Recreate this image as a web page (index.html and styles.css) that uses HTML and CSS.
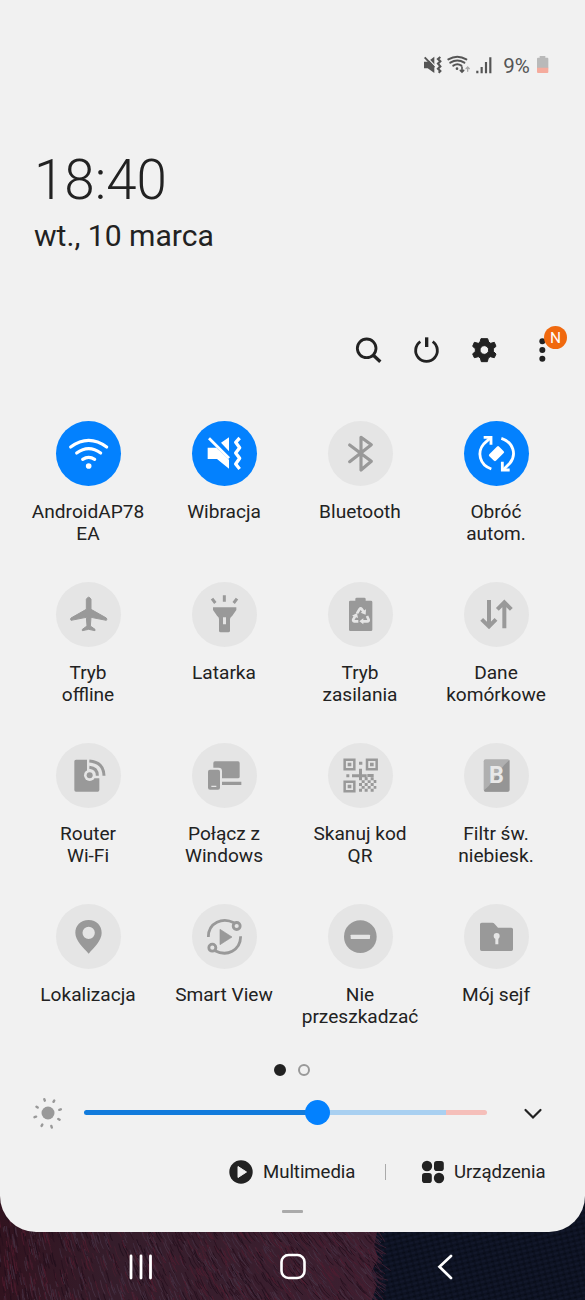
FILE: index.html
```html
<!DOCTYPE html>
<html lang="pl">
<head>
<meta charset="utf-8">
<title>Szybki panel</title>
<link rel="stylesheet" href="styles.css">
</head>
<body>
<div class="phone">
<main class="panel">
  <div class="status">
    <svg class="st-mute" viewBox="42 30 56 60"><path d="M42 50h11L73 35v49L53 70H42z" fill="#555"/><path d="M49 35l26 28" stroke="#f1f1f1" stroke-width="4"/><path d="M44 37l29 30" stroke="#555" stroke-width="6"/><path d="M91 36l-7 6 7 7-7 7 7 8-7 7 7 7-5 5" fill="none" stroke="#555" stroke-width="6.500"/></svg>
    <svg class="st-wifi" viewBox="112 30 72 60" fill="none" stroke="#555" stroke-width="6" stroke-linecap="round"><path d="M116 43q27-16 54 0M122 53q21-13 42 0M131 62q12-8 24 0"/><circle cx="142" cy="71" r="4" fill="#555" stroke="none"/><path d="M157 66v14m-5-4l5 5 5-5" stroke-width="5"/><path d="M174 79V66m-5 5l5-5 5 5" stroke="#aaa" stroke-width="4"/></svg>
    <svg class="st-signal" viewBox="198 30 50 60" stroke="#555" stroke-width="6.500"><path d="M202 85v-8M215 85V66M228 85V51M241 85V37"/></svg>
    <span class="percent">9%</span>
    <svg class="st-battery" viewBox="378 30 40 60"><path d="M381 41q0-3 3-3h5v-5h17v5h6q3 0 3 3v29h-34z" fill="#b9b9b9"/><path d="M381 68h34v13q0 3-3 3h-28q-3 0-3-3z" fill="#f5ab9d"/></svg>
  </div>
  <div class="clock">18:40</div>
  <div class="date">wt., 10 marca</div>
  <div class="tools">
    <svg viewBox="42 45 87 87" fill="none" stroke="#222" stroke-width="8.500"><circle cx="80" cy="85" r="28"/><path d="M100 106l21 19" stroke-width="10"/></svg>
    <svg viewBox="216 45 87 87" fill="none" stroke="#222" stroke-width="8.500"><path d="M241 65A32.500 32.500 0 1 0 278 65"/><path d="M260 52v29" stroke-width="10"/></svg>
    <svg viewBox="390 45 87 87"><path fill="#222" fill-rule="evenodd" d="M423 56h20l3 10 6 4 11-3 5 12-8 7v8l8 8-5 11-12-3-6 4-3 11h-18l-3-11-6-4-12 3-5-11 8-8v-8l-8-7 5-12 12 3 5-4zM433 77a13 13 0 1 0 0 26 13 13 0 1 0 0-26z" stroke="#222" stroke-width="3" stroke-linejoin="round"/></svg>
    <div class="more">
      <svg viewBox="564 45 87 87" fill="#222"><circle cx="607" cy="64" r="9"/><circle cx="607" cy="90" r="9"/><circle cx="607" cy="116" r="9"/></svg>
      <span class="badge">N</span>
    </div>
  </div>

  <div class="grid">
    <div class="tile on"><svg viewBox="108 35 195 195"><g fill="none" stroke="#fff" stroke-width="9.500" stroke-linecap="round"><path d="M152 113q54-40 108 0M170 131q36-26 72 0M188 150q18-12 36 0"/></g><circle cx="206" cy="170" r="8.500" fill="#fff"/></svg><p>AndroidAP78<br>EA</p></div>
    <div class="tile on"><svg viewBox="516 35 195 195"><path d="M603 100l24-16v42zM563 115h26l38 36v27l-36-29h-28z" fill="#fff"/><path d="M567 87l60 60" stroke="#fff" stroke-width="8.500"/><path d="M659 86l-12 13 12 16-12 16 12 16-12 17 12 15" fill="none" stroke="#fff" stroke-width="10" stroke-linejoin="round"/></svg><p>Wibracja</p></div>
    <div class="tile"><svg viewBox="84 35 195 195"><path d="M149 107l65 49-31 26V84l31 22-65 51" fill="none" stroke="#999" stroke-width="9.500" stroke-linejoin="round" stroke-linecap="round"/></svg><p>Bluetooth</p></div>
    <div class="tile on"><svg viewBox="492 35 195 195"><g fill="none" stroke="#fff" stroke-width="8.500"><path d="M574 179C538 167 530 128 552 103l20-18"/><path d="M604 87C641 99 650 136 630 161l-20 20"/><path d="M551 84h22v22M607 157v25h22"/></g><rect x="569" y="119" width="41" height="28" rx="4" fill="#fff" transform="rotate(-45 589.500 133)"/></svg><p>Obróć<br>autom.</p></div>

    <div class="tile"><svg viewBox="108 23 195 195"><path fill="#999" stroke="#999" stroke-width="3" stroke-linejoin="round" d="M199 75q7-13 14 0v30l46 26q3 4 0 7l-46-9-2 26 14 10v4l-19-4-19 4v-4l14-10-2-26-46 9q-3-3 0-7l46-26z"/></svg><p>Tryb<br>offline</p></div>
    <div class="tile"><svg viewBox="516 23 195 195"><path d="M613 63v19M576 73l10 13M651 73l-10 13" stroke="#999" stroke-width="9"/><path fill="#999" fill-rule="evenodd" d="M579 99h70v8l-12 17q-7 5-7 10v35q0 5-5 5h-23q-5 0-5-5v-35q0-6-6-10l-12-17zM609 129v21h9v-21z"/></svg><p>Latarka</p></div>
    <div class="tile"><svg viewBox="84 23 195 195"><path fill="#999" d="M151 79h15v-5q0-4 4-4h23q4 0 4 4v5h16q4 0 4 4v83q0 4-4 4h-62q-4 0-4-4V83q0-4 4-4z"/><g fill="none" stroke="#e5e5e5" stroke-width="8"><path d="M171 117l8-13q3-4 6 0l6 9M201 125l5 11q1 5-4 5h-15M175 141h-12q-5-1-3-6l5-9"/></g><path fill="#e5e5e5" d="M182 115l15 6 1-16zM190 132v18l-12-9zM174 131l-3-15-15 8z"/></svg><p>Tryb<br>zasilania</p></div>
    <div class="tile"><svg viewBox="492 23 195 195"><path d="M567 77v77M545 135l22 21 21-21M613 162V86M592 105l21-21 21 21" fill="none" stroke="#999" stroke-width="12"/></svg><p>Dane<br>komórkowe</p></div>

    <div class="tile"><svg viewBox="108 25 195 195"><path d="M168 75h33v35a14 14 0 1 0 20 20h17v36q0 5-5 5h-65q-5 0-5-5V80q0-5 5-5z" fill="#999"/><path d="M203 70v37l15 24h45C265 97 240 68 203 70z" fill="#e5e5e5"/><circle cx="209" cy="122" r="17" fill="#e5e5e5"/><circle cx="209" cy="122" r="9" fill="#999"/><path d="M208 98q24 2 24 25M208 79q43 3 44 44" fill="none" stroke="#999" stroke-width="9"/></svg><p>Router<br>Wi-Fi</p></div>
    <div class="tile"><svg viewBox="516 25 195 195"><rect x="580" y="80" width="79" height="51" rx="5" fill="#999"/><path d="M602 146h62" stroke="#999" stroke-width="10"/><rect x="558" y="99" width="48" height="72" rx="10" fill="#e5e5e5"/><rect x="564" y="105" width="36" height="60" rx="6" fill="#999"/><path d="M574 155h15" stroke="#e5e5e5" stroke-width="4"/></svg><p>Połącz z<br>Windows</p></div>
    <div class="tile"><svg viewBox="84 25 195 195"><g fill="none" stroke="#999" stroke-width="7.500"><path d="M134 75h29v29h-29zM201 75h29v29h-29zM134 141h29v29h-29z"/></g><path fill="#999" d="M143 84h11v11h-11zM210 84h11v11h-11zM143 150h11v11h-11zM177 81h10v9h-10zM139 119h9v9h-9zM156 119h21v9h-21zM177 102h9v17h14v9h-14v9h-9zM202 118h19v9h-19zM194 128h9v9h-9zM212 128h9v9h-9zM221 136h8v9h-8zM185 137h9v8h-9zM203 137h9v8h-9zM177 145h9v9h-9zM194 145h9v9h-9zM212 145h9v9h-9zM185 154h9v8h-9zM203 154h9v8h-9zM221 154h8v8h-8zM177 162h9v9h-9zM194 162h9v9h-9zM212 162h9v9h-9z"/></svg><p>Skanuj kod<br>QR</p></div>
    <div class="tile"><svg viewBox="492 25 195 195"><rect x="551" y="74" width="78" height="97" rx="6" fill="#b0b0b0"/><path d="M628 76v90q0 5-5 5h-67q-4 0-4-4l14-13 46-62z" fill="#959595"/><text x="567" y="144" class="filter-letter">B</text></svg><p>Filtr św.<br>niebiesk.</p></div>

    <div class="tile"><svg viewBox="108 27 195 195"><path fill="#999" fill-rule="evenodd" d="M206 75c-25 0-40 17-40 39 0 23 24 44 40 62 16-18 39-39 39-62 0-22-15-39-39-39zm0 20a18 18 0 1 1 0 37 18 18 0 1 1 0-37z"/></svg><p>Lokalizacja</p></div>
    <div class="tile"><svg viewBox="516 27 195 195"><path d="M600 103l36 23-36 23z" fill="#999" stroke="#999" stroke-width="2" stroke-linejoin="round"/><g fill="none" stroke="#999" stroke-width="8.500"><path d="M565 126C565 82 608 66 642 83"/><circle cx="650" cy="93" r="10.500"/><path d="M662 124c-1 43-41 62-77 43"/><circle cx="577" cy="158" r="10.500"/></g></svg><p>Smart View</p></div>
    <div class="tile"><svg viewBox="84 27 195 195"><circle cx="181" cy="125" r="49" fill="#999"/><rect x="152" y="119" width="58" height="13" rx="2" fill="#e5e5e5"/></svg><p>Nie<br>przeszkadzać</p></div>
    <div class="tile"><svg viewBox="492 27 195 195"><path d="M545 83h32q4 0 7 4l10 11h40q5 0 5 5v60q0 5-5 5h-89q-5 0-5-5V88q0-5 5-5z" fill="#999"/><circle cx="590" cy="123" r="9" fill="#e5e5e5"/><path d="M586 128h9v20h-9z" fill="#e5e5e5"/></svg><p>Mój sejf</p></div>
  </div>

  <div class="pages"><i class="dot current"></i><i class="dot"></i></div>

  <div class="brightness">
    <svg class="sun" viewBox="0 0 30 34"><circle cx="15" cy="17" r="6.500" fill="#999"/><g stroke="#999" stroke-width="2.400" stroke-linecap="round"><path d="M11.300 3.200l.5 1.500M21.200 4.600l-.7 1.200M27.800 13.300l-1.500.5M26.600 23.700l-1.300-.8M18.800 31.500l-.5-1.600M8.600 29.900l.7-1.300M1.500 21.200l1.600-.5M3.500 10.700l1.200.8"/></g></svg>
    <div class="track"><i class="filled"></i><i class="rest"></i><i class="high"></i><i class="thumb"></i></div>
    <svg class="chevron" viewBox="0 0 20 14"><path d="M2.500 3l7.500 7.500L17.500 3" fill="none" stroke="#222" stroke-width="2.200" stroke-linecap="round"/></svg>
  </div>

  <div class="links">
    <svg class="play" viewBox="0 0 24 24"><circle cx="12" cy="12" r="11.700" fill="#222"/><path d="M9 6.500l8.500 5.500L9 17.500z" fill="#f1f1f1" stroke="#f1f1f1" stroke-linejoin="round"/></svg>
    <span class="media">Multimedia</span>
    <i class="divider"></i>
    <svg class="devices" viewBox="0 0 24 24" fill="#222"><circle cx="6" cy="6" r="5.200"/><rect x="13" y="1" width="9.800" height="10" rx="2.800"/><rect x="1" y="13" width="9.800" height="10" rx="2.800"/><circle cx="18" cy="18" r="5.200"/></svg>
    <span class="dev">Urządzenia</span>
  </div>
  <i class="handle"></i>
</main>

<nav class="nav">
  <svg class="wallpaper" viewBox="0 0 585 110" preserveAspectRatio="none">
    <defs>
      <linearGradient id="wool"><stop offset="0" stop-color="#31131f"/><stop offset=".3" stop-color="#351d2b"/><stop offset="1" stop-color="#3d1f30"/></linearGradient>
      <pattern id="weave" width="6" height="5" patternUnits="userSpaceOnUse" patternTransform="rotate(-14)"><path d="M0 1h4" stroke="#141a2e" stroke-width="1.300"/><path d="M3 3.500h3" stroke="#080c18" stroke-width="1.500"/></pattern>
    </defs>
    <rect width="585" height="110" fill="#0d1222"/>
    <rect width="585" height="110" fill="url(#weave)"/>
    <path d="M0 0h377v42l-3 14 4 12-7 15 6 12-5 15H0z" fill="url(#wool)"/>
    <g id="fibres"></g>
  </svg>
  <div class="buttons">
    <svg viewBox="0 0 30 30" stroke="#fff" stroke-width="2.800" stroke-linecap="round"><path d="M5 5v22M15 5v22M24.500 5v22"/></svg>
    <svg viewBox="0 0 30 30"><rect x="3.500" y="4" width="23" height="23" rx="7" fill="none" stroke="#fff" stroke-width="2.600"/></svg>
    <svg viewBox="0 0 30 30"><path d="M21 5L9.500 15.700 21 27" fill="none" stroke="#fff" stroke-width="2.700" stroke-linecap="round"/></svg>
  </div>
</nav>
</div>
<script src="wallpaper.js"></script>
</body>
</html>
```
FILE: styles.css
```css
* { box-sizing: border-box; }
body { margin: 0; font-family: Roboto, "Noto Sans", sans-serif; color: #222; background: #0c1121; }
p { margin: 0; }
svg { display: block; flex: none; }
.phone { width: 585px; height: 1300px; overflow: hidden; }
.panel { position: relative; z-index: 1; height: 1232px; padding-top: 55px; background: #f1f1f1; border-radius: 0 0 36px 36px; }
.status { display: flex; align-items: center; height: 20px; padding-left: 424px; }
.st-mute { width: 18.67px; height: 20px; margin-right: 4.67px; }
.st-wifi { width: 24px; height: 20px; margin-right: 4.67px; }
.st-signal { width: 16.67px; height: 20px; margin-right: 10.5px; }
.percent { width: 32.8px; font-size: 20.5px; line-height: 20px; color: #555; white-space: nowrap; padding-top: 2px; }
.st-battery { width: 13.33px; height: 20px; }
.clock { margin-top: 72px; padding-left: 34px; height: 66px; font-size: 54.7px; font-weight: 300; line-height: 66px; }
.date { margin-top: 5px; padding-left: 34px; height: 36px; font-size: 30.1px; line-height: 36px; }
.tools { display: flex; gap: 29px; margin-top: 81px; padding-left: 354px; }
.tools svg { width: 29px; height: 29px; }
.more { position: relative; }
.badge { position: absolute; left: 16px; top: -9px; width: 23px; height: 23px; border-radius: 50%; background: #f0690f; color: #fff; font-size: 15.5px; line-height: 24px; text-align: center; }
.grid { display: grid; grid-template-columns: repeat(4, 136px); grid-auto-rows: 161px; margin-top: 57px; padding-left: 20px; }
.tile { display: flex; flex-direction: column; align-items: center; gap: 14.5px; font-size: 19.1px; line-height: 22px; text-align: center; white-space: nowrap; }
.tile svg { width: 65px; height: 65px; border-radius: 50%; background: #e5e5e5; }
.tile.on svg { background: #0381fe; }
.filter-letter { font-size: 70px; font-weight: 700; fill: #e8e8e8; }
.pages { display: flex; justify-content: center; gap: 12px; height: 12px; margin-top: -1px; padding-right: 1px; }
.dot { width: 12px; height: 12px; border: 2px solid #999; border-radius: 50%; }
.dot.current { background: #222; border-color: #222; }
.brightness { display: flex; align-items: center; height: 34px; margin-top: 19.5px; padding-left: 33px; }
.sun { width: 30px; height: 34px; margin-right: 21px; }
.track { position: relative; display: flex; width: 403px; height: 5px; border-radius: 3px; }
.filled { width: 233px; background: #127bdc; border-radius: 3px 0 0 3px; }
.rest { width: 129px; background: #a9d0f1; }
.high { width: 41px; background: #f5bfba; border-radius: 0 3px 3px 0; }
.thumb { position: absolute; left: 221px; top: -10px; width: 25px; height: 25px; border-radius: 50%; background: #0381fe; }
.chevron { width: 20px; height: 14px; margin-left: 36px; margin-top: 2px; }
.links { display: flex; align-items: center; height: 24px; margin-top: 30px; padding-left: 229px; font-size: 18.6px; line-height: 24px; }
.play { width: 24px; height: 24px; margin-right: 10px; }
.media { width: 121px; letter-spacing: -.05px; }
.divider { width: 1px; height: 16px; margin: 0 35px 0 1px; background: #aaa; }
.devices { width: 24px; height: 24px; margin-right: 9px; }
.dev { letter-spacing: -.05px; }
.handle { display: block; width: 21px; height: 3px; margin: 26px auto 0; background: #aaa; border-radius: 1px; }
.nav { position: relative; height: 110px; margin-top: -42px; padding-top: 61px; }
.wallpaper { position: absolute; left: 0; top: 0; width: 585px; height: 110px; }
.buttons { position: relative; display: flex; gap: 122px; padding-left: 126px; }
.buttons svg { width: 30px; height: 30px; }
```
FILE: wallpaper.js
```js
// Draws the woollen fibres of the wallpaper with a fixed pseudo-random sequence.
let seed = 17;
const rnd = () => (seed = (seed * 16807) % 2147483647) / 2147483647;
const colours = ["#1d0c19", "#571c30", "#4a3648", "#260f1d", "#4b1e30", "#453246"];
let fibres = "";
for (let i = 0; i < 1900; i++) {
  const x = rnd() * 380 - 5, y = rnd() * 115 - 5, l = 5 + rnd() * 10;
  const lean = 0.15 + 0.75 * x / 380;
  fibres += `<path d="M${x} ${y}q${l * lean * .3} ${l * .6} ${l * lean} ${l}" stroke="${colours[Math.floor(rnd() * 6)]}"/>`;
}
// Loose strands along the seam with the fabric.
for (let y = 30; y < 110; y += 2) {
  const x = 368 + rnd() * 10;
  fibres += `<path d="M${x} ${y}l${5 + rnd() * 9} ${4 + rnd() * 8}" stroke="#4a2438"/>`;
}
document.getElementById("fibres").innerHTML = `<g fill="none" stroke-width="1" opacity=".7">${fibres}</g>`;
```
